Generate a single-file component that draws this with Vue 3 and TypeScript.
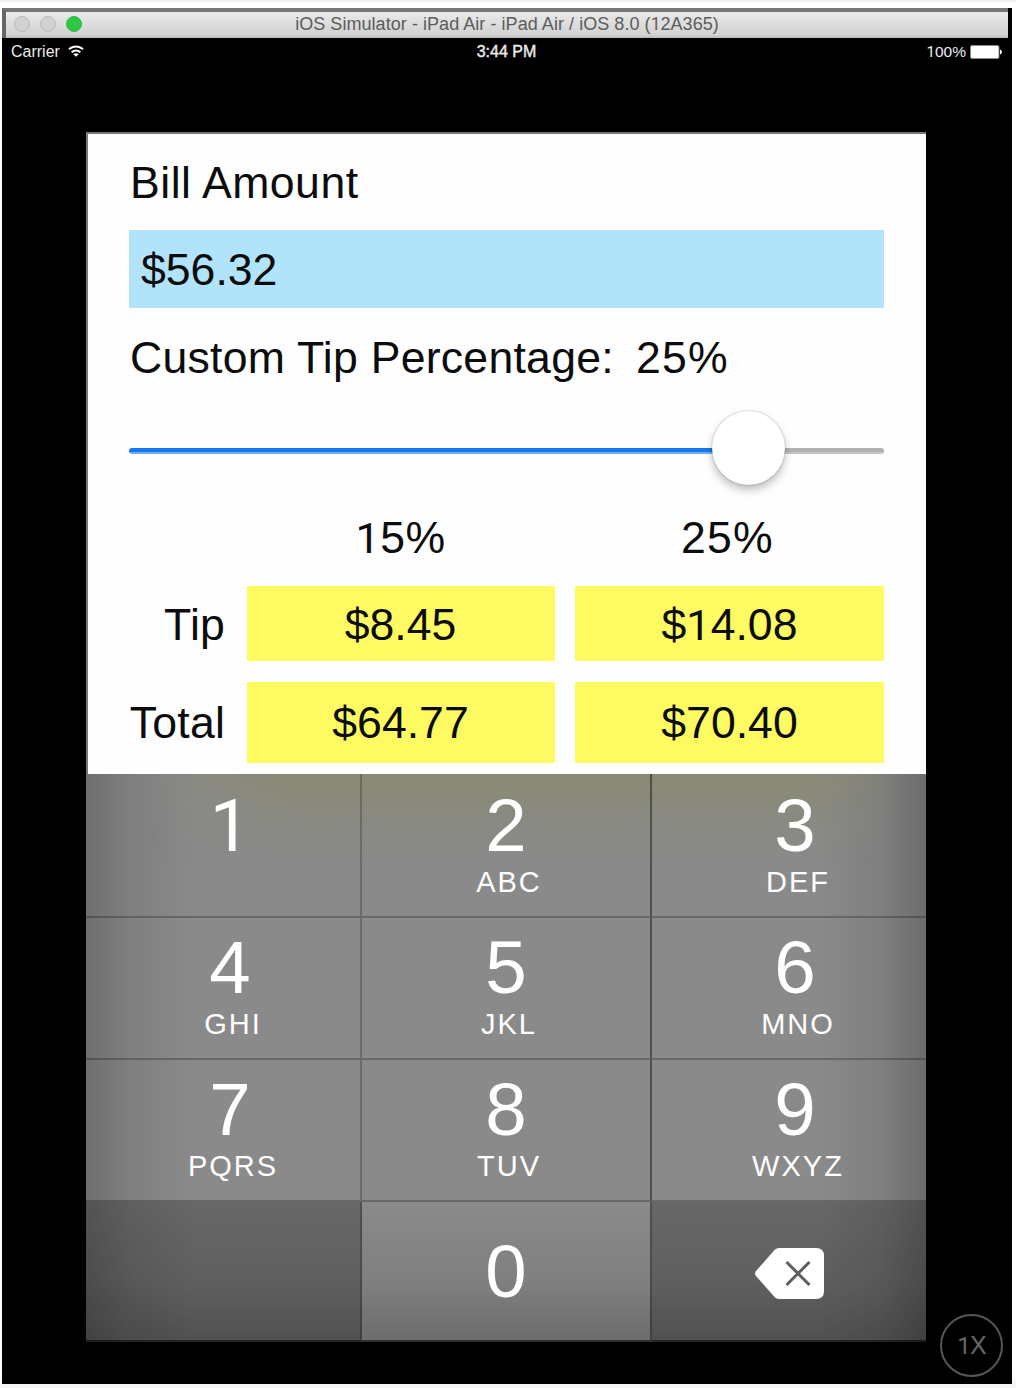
<script setup lang="ts">
import { h, ref, computed, type FunctionalComponent } from 'vue'

interface Key {
  digit: string
  letters?: string
}

const bill = ref(56.32)
const customPercent = ref(25)
const fixedPercent = 15

const money = (value: number): string => '$' + value.toFixed(2)
const tipFor = (percent: number): number => (bill.value * percent) / 100

const rows = computed(() => [
  { label: 'Tip', values: [money(tipFor(fixedPercent)), money(tipFor(customPercent.value))] },
  {
    label: 'Total',
    values: [
      money(bill.value + tipFor(fixedPercent)),
      money(bill.value + tipFor(customPercent.value)),
    ],
  },
])

const sliderFill = computed(() => ((customPercent.value / 30) * 82) / (25 / 30) + '%')

const keys: Key[] = [
  { digit: '1' },
  { digit: '2', letters: 'ABC' },
  { digit: '3', letters: 'DEF' },
  { digit: '4', letters: 'GHI' },
  { digit: '5', letters: 'JKL' },
  { digit: '6', letters: 'MNO' },
  { digit: '7', letters: 'PQRS' },
  { digit: '8', letters: 'TUV' },
  { digit: '9', letters: 'WXYZ' },
]

// Text whose digit one is drawn without a foot
const Num: FunctionalComponent<{ text: string }> = (props) =>
  h(
    'span',
    props.text
      .split(/(1)/)
      .filter((part) => part !== '')
      .map((part) => (part === '1' ? h('span', { class: 'plain-one' }, part) : part)),
  )
Num.props = ['text']
</script>

<template>
  <div class="page">
    <div class="window">
      <header class="titlebar">
        <div class="lights">
          <i class="light"></i>
          <i class="light"></i>
          <i class="light green"></i>
        </div>
        <div class="title"><Num text="iOS Simulator - iPad Air - iPad Air / iOS 8.0 (12A365)" /></div>
        <div class="lights-space"></div>
      </header>

      <div class="statusbar">
        <div class="carrier">
          <span>Carrier</span>
          <svg width="16" height="12" viewBox="0 0 16 12">
            <path d="M1 4.3C5 .4 11 .4 15 4.3" fill="none" stroke="#f4f4f4" stroke-width="2" />
            <path d="M3.600 7.300C6.200 5 9.800 5 12.400 7.300" fill="none" stroke="#f4f4f4" stroke-width="2" />
            <path d="M8 11.800L5.200 9.300C6.900 8 9.100 8 10.800 9.300Z" fill="#f4f4f4" />
          </svg>
        </div>
        <div class="clock">3:44 PM</div>
        <div class="battery">
          <span><Num text="100%" /></span>
          <svg width="33" height="14" viewBox="0 0 33 14">
            <rect x=".5" y=".5" width="28.500" height="13" rx="1.500" fill="#fff" stroke="#8a8a8a" />
            <path d="M30 4.600C32.500 5.400 32.500 8.600 30 9.400Z" fill="#fff" />
          </svg>
        </div>
      </div>

      <main class="app">
        <section class="form">
          <div class="line bill-label">Bill Amount</div>
          <div class="bill-field">{{ money(bill) }}</div>
          <div class="line tip-label">
            <span>Custom Tip Percentage:</span><span class="percent">{{ customPercent }}%</span>
          </div>
          <div class="slider">
            <div class="fill" :style="{ width: sliderFill }"></div>
            <div class="rest"></div>
            <div class="knob" :style="{ left: sliderFill }"></div>
          </div>
          <div class="grid">
            <div></div>
            <div class="head"><Num :text="fixedPercent + '%'" /></div>
            <div class="head custom">{{ customPercent }}%</div>
            <template v-for="row in rows" :key="row.label">
              <div class="row-label">{{ row.label }}</div>
              <div v-for="(value, i) in row.values" :key="i" class="amount"><Num :text="value" /></div>
            </template>
          </div>
        </section>

        <section class="keypad">
          <div v-for="key in keys" :key="key.digit" class="key">
            <div class="digit"><Num :text="key.digit" /></div>
            <div class="letters">{{ key.letters }}</div>
          </div>
          <div class="key dark"></div>
          <div class="key zero"><div class="digit">0</div></div>
          <div class="key dark erase">
            <svg width="71" height="53" viewBox="0 0 71 53">
              <path
                d="M25 1H62Q70 1 70 9V44Q70 52 62 52H25Q22.500 52 20.500 50L2 29Q0 26.500 2 24L20.500 3Q22.500 1 25 1Z"
                fill="#fff"
              />
              <path d="M32.500 15L55.500 38M55.500 15L32.500 38" stroke="#5e5e5e" stroke-width="3" />
            </svg>
          </div>
        </section>
      </main>

      <div class="zoom-badge"><Num text="1X" /></div>
    </div>
  </div>
</template>

<style>
body {
  margin: 0;
  background: #fff;
}
.plain-one {
  font-family: Roboto, sans-serif;
  font-size: 0.97em;
}
</style>

<style scoped>
.page {
  box-sizing: border-box;
  width: 1016px;
  height: 1388px;
  padding: 6px 4px 4px 2px;
  border-top: 2px solid #f0f0f0;
  background: linear-gradient(#fff 0 1370px, #f6f6f6 1382px);
  font-family: 'Liberation Sans', Arial, sans-serif;
  color: #0c0c0c;
  overflow: hidden;
}
.window {
  position: relative;
  width: 1010px;
  height: 1376px;
  background: #000;
}
.titlebar {
  box-sizing: border-box;
  display: flex;
  align-items: center;
  justify-content: space-between;
  width: 1006px;
  height: 30px;
  padding: 0 8px 2px;
  border-top: 4px solid #757575;
  border-left: 4px solid #666;
  background: linear-gradient(#e9e9e9, #d2d2d2 23px, #b9b9b9 26px);
}
.lights,
.lights-space {
  display: flex;
  gap: 10px;
  width: 80px;
}
.light {
  box-sizing: border-box;
  width: 16px;
  height: 16px;
  border: 1px solid #b9b9b9;
  border-radius: 50%;
  background: #d2d2d2;
}
.green {
  border-color: #30b945;
  background: #2cc840;
}
.title {
  font-size: 18px;
  line-height: 24px;
  letter-spacing: 0.05px;
  color: #5c5c5c;
  white-space: nowrap;
}
.statusbar {
  display: grid;
  grid-template-columns: 1fr auto 1fr;
  align-items: center;
  height: 28px;
  padding: 0 9px 0 9px;
  color: #ececec;
  font-size: 16px;
  line-height: 28px;
}
.carrier,
.battery {
  display: flex;
  align-items: center;
}
.carrier svg {
  margin: 0 0 2px 8px;
}
.clock {
  margin-left: -1px;
  -webkit-text-stroke: 0.4px #ececec;
}
.battery {
  justify-content: flex-end;
  font-size: 15.5px;
}
.battery svg {
  margin-left: 4px;
}
.app {
  box-sizing: border-box;
  width: 840px;
  height: 1210px;
  margin: 66px 0 0 84px;
  background: #fefefe;
}
.form {
  box-sizing: border-box;
  height: 642px;
  padding: 0 42px 0 41px;
  border-top: 2px solid #777;
  border-left: 2px solid #777;
  font-size: 44.6px;
}
.line {
  padding-left: 1px;
  white-space: pre;
  letter-spacing: 0.25px;
}
.bill-label {
  height: 96px;
  line-height: 97px;
  letter-spacing: 0.5px;
}
.bill-field {
  height: 78px;
  padding-left: 12px;
  background: #b1e4fb;
  line-height: 80px;
}
.tip-label {
  display: flex;
  gap: 22px;
  height: 100px;
  line-height: 100px;
}
.percent {
  letter-spacing: 1.2px;
}
.slider {
  position: relative;
  display: flex;
  height: 6px;
  padding: 40px 0 54px;
}
.fill {
  border-radius: 3px 0 0 3px;
  background: linear-gradient(#1678f0 0 4px, #6caefa 4px);
}
.rest {
  flex: 1;
  border-radius: 0 3px 3px 0;
  background: linear-gradient(#b2b2b2 0 4px, #c5c5c5 4px);
}
.knob {
  position: absolute;
  top: 3px;
  width: 73px;
  height: 74px;
  margin-left: -36px;
  border-radius: 50%;
  background: #fff;
  box-shadow:
    0 0 2px rgba(0, 0, 0, 0.3),
    0 5px 9px rgba(0, 0, 0, 0.25);
}
.grid {
  display: grid;
  grid-template-columns: 97px 308px 309px;
  grid-template-rows: 56px 75px 81px;
  column-gap: 20.5px;
  row-gap: 21.5px;
}
.head {
  text-align: center;
  line-height: 59px;
  letter-spacing: 0.4px;
}
.head.custom {
  padding-right: 4px;
  letter-spacing: 1.2px;
}
.row-label {
  padding-right: 1px;
  text-align: right;
  line-height: 77px;
  letter-spacing: 0.2px;
}
.amount {
  background: #fefb62;
  text-align: center;
  line-height: 77px;
}
.amount:nth-last-child(-n + 2),
.row-label:nth-last-child(-n + 3) {
  line-height: 82px;
}
.keypad {
  position: relative;
  display: grid;
  grid-template-columns: 276px 290px 274px;
  grid-template-rows: 144px 142px 142px 140px;
  height: 568px;
  background: #8a8a8a;
  color: #fff;
  text-align: center;
}
/* shading toward the pad's edges and the colour that shows through at its top */
.keypad::before {
  content: '';
  position: absolute;
  inset: 0;
  background:
    linear-gradient(90deg, rgba(0, 0, 0, 0.2), rgba(0, 0, 0, 0.08) 45px, transparent 110px),
    linear-gradient(270deg, rgba(0, 0, 0, 0.22), rgba(0, 0, 0, 0.08) 45px, transparent 110px),
    linear-gradient(0deg, rgba(0, 0, 0, 0.22), rgba(0, 0, 0, 0.08) 60px, transparent 140px);
}
.keypad::after {
  content: '';
  position: absolute;
  inset: 0 0 auto;
  height: 90px;
  background: linear-gradient(rgba(138, 138, 100, 0.6), rgba(138, 138, 110, 0.25) 45px, transparent);
  mask-image: linear-gradient(90deg, transparent 60px, #000 210px, #000 720px, transparent 820px);
}
.key {
  position: relative;
  z-index: 1;
  box-sizing: border-box;
  border-right: 2px solid rgba(0, 0, 0, 0.22);
  border-bottom: 2px solid rgba(0, 0, 0, 0.24);
  padding-left: 14px;
}
.key:nth-child(3n + 2) {
  padding-left: 0;
  border-right-color: rgba(0, 0, 0, 0.42);
}
.key:nth-child(3n) {
  padding-left: 12px;
  border-right: 0;
}
.key:nth-child(n + 10) {
  border-bottom-color: rgba(0, 0, 0, 0.55);
}
.dark {
  background: rgba(0, 0, 0, 0.25);
}
.digit {
  height: 94px;
  font-size: 74.5px;
  line-height: 103px;
}
.key:nth-child(n + 4) .digit {
  height: 92px;
  line-height: 99px;
}
.key.zero .digit {
  line-height: 139px;
}
.letters {
  height: 29px;
  padding-left: 6px;
  font-size: 29px;
  line-height: 29px;
  letter-spacing: 2px;
}
.erase {
  display: flex;
  justify-content: center;
  align-items: center;
  padding-top: 5px;
}
.erase svg {
  margin-left: -12px;
}
.zoom-badge {
  position: absolute;
  left: 938px;
  top: 1306px;
  box-sizing: border-box;
  width: 63px;
  height: 63px;
  border: 2px solid #565656;
  border-radius: 50%;
  color: #686868;
  font-size: 25px;
  line-height: 59px;
  letter-spacing: -1px;
  text-align: center;
}
</style>
